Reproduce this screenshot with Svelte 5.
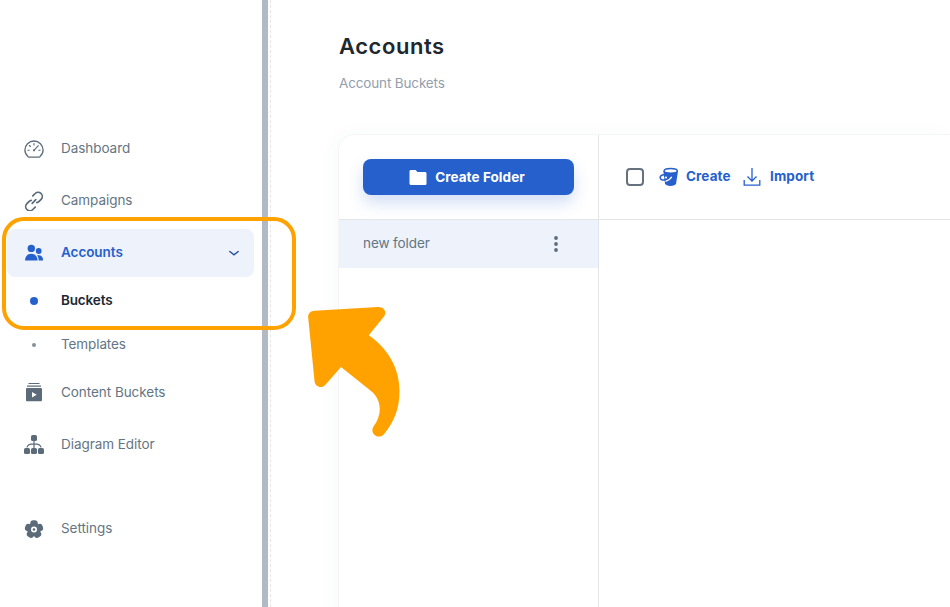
<script>
  const main = [
    { id: 'dashboard', label: 'Dashboard' },
    { id: 'campaigns', label: 'Campaigns' }
  ];
  const tools = [
    { id: 'content', label: 'Content Buckets' },
    { id: 'diagram', label: 'Diagram Editor' }
  ];
</script>

{#snippet icon(id)}
  <svg class="icon" width="20" height="20" viewBox="0 0 20 20" fill="currentColor">
    {#if id === 'dashboard'}
      <path d="M4.2 17.7C2.2 16.1.9 13.700.9 11.100a9.1 9.1 0 0 1 18.2 0c0 2.6-1.3 5-3.3 6.6-.4.3-.8.4-1.3.4h-9c-.5 0-.9-.1-1.3-.4z" fill="none" stroke="currentColor" stroke-width="1.3" />
      <path d="M10 4.500v1.500M5.4 6.500l1 1M3.900 11.300h1.300M14.8 11.300h1.300M10 11.300l4.3-4.600" fill="none" stroke="currentColor" stroke-width="1.1" stroke-linecap="round" />
      <circle cx="10" cy="11.3" r="1.100" />
    {:else if id === 'campaigns'}
      <g fill="none" stroke="currentColor" stroke-width="1.7" stroke-linecap="round">
        <path d="M8.800 4.800l2.400-2.300a4.200 4.200 0 0 1 5.900 0 4.200 4.200 0 0 1 0 5.900l-2.300 2.300c-.6.6-1.300.9-2 1" />
        <path d="M11.200 16.200l-2.400 2.300a4.200 4.200 0 0 1-5.900 0 4.200 4.200 0 0 1 0-5.900l2.300-2.300c.6-.6 1.300-.9 2-1" />
        <path d="M8.200 12.300l3.600-3.600" />
      </g>
    {:else if id === 'accounts'}
      <circle cx="7.3" cy="5.4" r="3.7" />
      <circle cx="14.7" cy="8" r="2.9" />
      <path d="M1 17.6c0-4.2 2.6-6.8 6.3-6.8s6.3 2.6 6.3 6.8z" />
      <path d="M14.7 17.6c0-2-.5-3.6-1.7-5 2.9-1.1 6.1.4 6.1 4.3 0 .5-.2.7-.6.7z" />
    {:else if id === 'content'}
      <path d="M4.500 0h11v1.1h-11zM3 2.500h14v1.200H3z" />
      <path fill-rule="evenodd" d="M3.3 5h13.4c.8 0 1.3.5 1.3 1.3V17c0 .8-.5 1.3-1.3 1.3H3.3C2.500 18.300 2 17.800 2 17V6.300C2 5.500 2.500 5 3.300 5zM8 9v5.600l4.700-2.800z" />
    {:else if id === 'diagram'}
      <rect x="7" y="0" width="6" height="6" rx="1.6" />
      <rect x="0" y="13" width="6" height="6" rx="1.6" />
      <rect x="7" y="13" width="6" height="6" rx="1.6" />
      <rect x="14" y="13" width="6" height="6" rx="1.6" />
      <path d="M10 5v9M3 12.5C3.2 10.3 6 8.8 10 8.8s6.8 1.5 7 3.7" fill="none" stroke="currentColor" stroke-width="1.2" />
    {:else if id === 'settings'}
      {#each [0, 72, 144, 216, 288] as angle}
        <rect x="6.300" y="1.300" width="7.400" height="8" rx="3" transform="rotate({angle} 10 10.500)" />
      {/each}
      <circle cx="10" cy="10.500" r="6.700" />
      <circle cx="10" cy="10.500" r="3" fill="#fff" />
      <circle cx="10" cy="10.500" r="1.300" />
    {/if}
  </svg>
{/snippet}

<div class="app">
  <nav>
    {#each main as item}
      <a class="item">{@render icon(item.id)}<span>{item.label}</span></a>
    {/each}
    <a class="item active">
      {@render icon('accounts')}<span>Accounts</span>
      <svg class="chevron" width="12" height="8" viewBox="0 0 12 8"><path d="M1.800 2.500l4.200 3.300 4.200-3.300" fill="none" stroke="currentColor" stroke-width="1.400" stroke-linecap="round" /></svg>
    </a>
    <a class="sub selected"><i></i><span>Buckets</span></a>
    <a class="sub"><i></i><span>Templates</span></a>
    <div class="tools">
      {#each tools as item}
        <a class="item">{@render icon(item.id)}<span>{item.label}</span></a>
      {/each}
    </div>
    <a class="item last">{@render icon('settings')}<span>Settings</span></a>
  </nav>
  <div class="divider"></div>
  <main>
    <h1>Accounts</h1>
    <p>Account Buckets</p>
    <section class="card">
      <aside>
        <div class="head">
          <button class="create">
            <svg width="18" height="16" viewBox="0 0 18 16"><path d="M2 0h4.500l2 2H16c1 0 1.500.6 1.500 1.500v10c0 1-.6 1.500-1.500 1.500H2c-.9 0-1.500-.6-1.500-1.500v-12C.5.600 1 0 2 0z" fill="#fff" /></svg>
            <span>Create Folder</span>
          </button>
        </div>
        <div class="folder">
          <span>new folder</span>
          <svg width="4" height="16" viewBox="0 0 4 16" fill="#5f6d7a"><circle cx="2" cy="2" r="1.900" /><circle cx="2" cy="8" r="1.900" /><circle cx="2" cy="14" r="1.900" /></svg>
        </div>
      </aside>
      <div class="content-area">
        <div class="toolbar">
          <span class="check"></span>
          <svg class="bucket" width="20" height="20" viewBox="0 0 20 20">
            <path d="M4.300 4L6 16.500c.3 1.600 2.700 2.500 5.500 2.500s5.300-.9 5.600-2.500L19 4z" fill="#2560cd" />
            <ellipse cx="11.700" cy="3.800" rx="6.600" ry="2.300" fill="#fff" stroke="#2560cd" stroke-width="1.400" />
            <path d="M6.500 14.300c2.800-.8 5-2.300 6.200-4.600" fill="none" stroke="#fff" stroke-width="1.300" />
            <path d="M5 7.700c-2.500.1-3.900 1.300-3.800 3 .1 1.900 2.200 2.700 4.800 2.100" fill="none" stroke="#2560cd" stroke-width="1.600" />
            <circle cx="7" cy="10.500" r="1.100" fill="#fff" />
          </svg>
          <span class="add">Create</span>
          <svg class="download" width="18" height="18" viewBox="0 0 18 18" fill="none" stroke="#2560cd" stroke-width="1.300"><path d="M9 0v13M4.500 8.500L9 13l4.500-4.500M1.200 12v5.200h15.600V12" /></svg>
          <span class="import">Import</span>
        </div>
      </div>
    </section>
  </main>
  <div class="outline"></div>
  <svg class="arrow" width="94" height="132" viewBox="307 306 94 132">
    <path d="M314.500 310.700L377.800 306.900C384 306.500 387.500 312.200 384 316.500L368.800 335.200C387 348 399.500 367 399.500 391C399.500 410 393.500 422 384.500 433.500C379 441 369 433.500 373.500 426.500C380 418 381 409 378.500 401.500C377 397 374.800 394 371 391L341 367L325.500 384.700C321.700 389 315 387 314.500 381L308.200 317.500C307.800 313.500 310.500 311 314.500 310.700Z" fill="#ffa200" />
  </svg>
</div>

<style>
  .app { position: relative; display: flex; width: 950px; height: 607px; overflow: hidden; background: #fff; font: 13.500px/20px Inter, "Open Sans", sans-serif; color: #647583; }
  nav { box-sizing: border-box; width: 262px; padding: 125px 8px 0 7px; flex: none; }
  .item { box-sizing: border-box; height: 48px; margin-bottom: 4px; display: flex; align-items: center; padding-left: 17px; border-radius: 8px; }
  .icon { flex: none; margin-right: 17px; color: #5b6b79; }
  .item span { margin-top: -2px; white-space: nowrap; letter-spacing: -.050px; }
  .active { background: #edf2fb; color: #2560cd; font-weight: 600; margin-bottom: 2px; }
  .active .icon { color: #2560cd; }
  .chevron { margin-left: auto; margin-right: 14px; color: #244e9e; }
  .sub { height: 44px; display: flex; align-items: center; padding-left: 17px; letter-spacing: -.1px; }
  .sub i { width: 4px; height: 4px; border-radius: 50%; background: #82909c; margin: 0 25px 0 8px; }
  .sub span { margin-top: -3px; }
  .selected { font-weight: 600; color: #202830; letter-spacing: -.15px; }
  .selected i { width: 8px; height: 8px; background: #2560cd; margin: 0 23px 0 6px; }
  .tools { padding-top: 2px; }
  .last { margin-top: 36px; }
  .divider { box-sizing: border-box; width: 9px; flex: none; border-left: 6px solid #b1bac3; border-right: 1px dashed #e4e6ea; }
  main { flex: 1; padding: 32px 0 0 67px; min-width: 0; }
  h1 { margin: 0 0 0 1px; font-size: 22px; line-height: 28px; font-weight: 600; color: #20272f; letter-spacing: .550px; }
  p { margin: 13px 0 41px 1px; color: #93a0ac; letter-spacing: -.150px; }
  .card { box-sizing: border-box; height: 500px; display: flex; border-top: 1px solid #f5f6f8; border-left: 1px solid #f4f5f7; border-radius: 16px 0 0; box-shadow: -4px 0 18px rgba(70, 85, 100, .03); }
  aside { box-sizing: border-box; width: 260px; border-right: 1px solid #e2e5e9; flex: none; }
  .head, .toolbar { box-sizing: border-box; height: 85px; border-bottom: 1px solid #e2e5e9; }
  .head { padding: 24px 24px 0; }
  .create { width: 211px; height: 36px; display: flex; align-items: center; justify-content: center; gap: 8px; border: 0; border-radius: 8px; background: #2560cd; color: #fff; font: 700 13.500px/20px Inter, sans-serif; letter-spacing: .070px; box-shadow: 0 8px 16px rgba(37, 96, 205, .2); padding: 0 3px 0 0; box-sizing: border-box; }
  .create svg { margin-top: 1px; }
  .create span { margin-top: -1px; }
  .folder { height: 48px; background: #edf2fb; display: flex; align-items: center; justify-content: space-between; padding: 0 40px 0 24px; }
  .folder span { margin-top: -2px; letter-spacing: -.1px; }
  .content-area { flex: 1; }
  .toolbar { display: flex; align-items: center; padding-left: 27px; color: #2560cd; font-weight: 700; }
  .check { box-sizing: border-box; width: 18px; height: 18px; border: 2px solid #65727e; border-radius: 4px; }
  .bucket { margin-left: 15px; margin-right: 7px; }
  .download { margin-left: 12px; margin-right: 9px; }
  .add, .import { margin-top: -2px; letter-spacing: .1px; }
  .add { width: 45px; }
  .outline { position: absolute; box-sizing: border-box; left: 2px; top: 217px; width: 294px; height: 113px; border: 4px solid #ffa200; border-radius: 22px; }
  .arrow { position: absolute; left: 307px; top: 306px; }
</style>
